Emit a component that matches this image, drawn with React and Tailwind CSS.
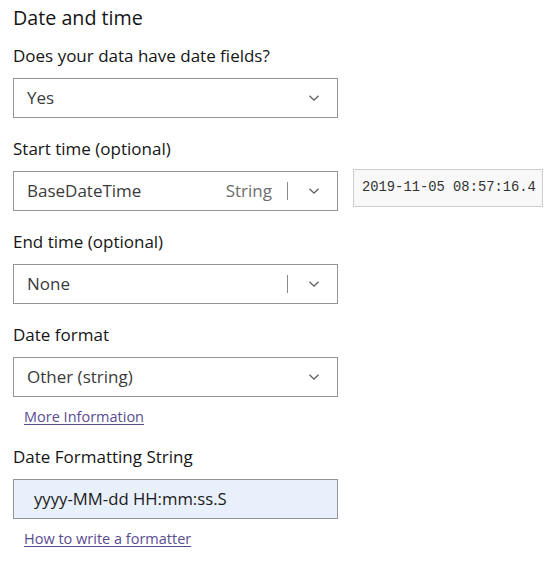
import React from "react";

const font = { fontFamily: "'Open Sans', 'Noto Sans', sans-serif" };

function Chevron() {
  return (
    <svg width="12" height="8" viewBox="0 0 12 8" className="shrink-0">
      <path d="M1.5 1.8 L6 6.2 L10.5 1.8" fill="none" stroke="#5a5a5a" strokeWidth="1.2" />
    </svg>
  );
}

function Select({ value, type, divider }) {
  return (
    <div className="flex h-[40px] w-[325px] items-center border border-[#959595] bg-white pl-[13px] pr-[17px]">
      <span className="flex-1 text-[17px] text-[#3b3b3b]">{value}</span>
      {type && <span className="mr-[15px] text-[17px] text-[#6e6e6e]">{type}</span>}
      {divider && <span className="mr-[20px] h-[18px] w-px bg-[#8a8a8a]" />}
      <Chevron />
    </div>
  );
}

function Label({ children }) {
  return <div className="mb-[10px] h-6 text-[17px] leading-6 text-[#151515]">{children}</div>;
}

export default function App() {
  return (
    <div className="min-h-screen bg-white pl-[13px] pt-[4px]" style={font}>
      <h2 className="mb-[12px] h-7 text-[19.7px] font-medium leading-7 text-[#151515]">Date and time</h2>

      <Label>Does your data have date fields?</Label>
      <Select value="Yes" />

      <div className="mt-[19px]">
        <Label>Start time (optional)</Label>
        <div className="flex items-start">
          <Select value="BaseDateTime" type="String" divider />
          <div className="ml-[15px] mt-[-2px] flex h-[38px] w-[190px] items-center border border-[#cccccc] bg-[#f8f8f8] pl-[8px] text-[13.8px] text-[#333] whitespace-nowrap" style={{ fontFamily: "'Liberation Mono', monospace" }}>
            2019-11-05 08:57:16.4
          </div>
        </div>
      </div>

      <div className="mt-[19px]">
        <Label>End time (optional)</Label>
        <Select value="None" divider />
      </div>

      <div className="mt-[19px]">
        <Label>Date format</Label>
        <Select value="Other (string)" />
      </div>

      <a href="#" className="ml-[11px] mt-[10px] block h-5 w-fit text-[14.5px] leading-5 text-[#5b4c8f] underline underline-offset-2">
        More Information
      </a>

      <div className="mt-[18px]">
        <Label>Date Formatting String</Label>
        <div className="flex h-[40px] w-[325px] items-center border border-[#959595] bg-[#e8f0fc] pl-[20px] text-[16.7px] text-[#1a1a1a]">
          yyyy-MM-dd HH:mm:ss.S
        </div>
      </div>

      <a href="#" className="ml-[11px] mt-[10px] block h-5 w-fit text-[14.5px] leading-5 text-[#5b4c8f] underline underline-offset-2">
        How to write a formatter
      </a>
    </div>
  );
}
